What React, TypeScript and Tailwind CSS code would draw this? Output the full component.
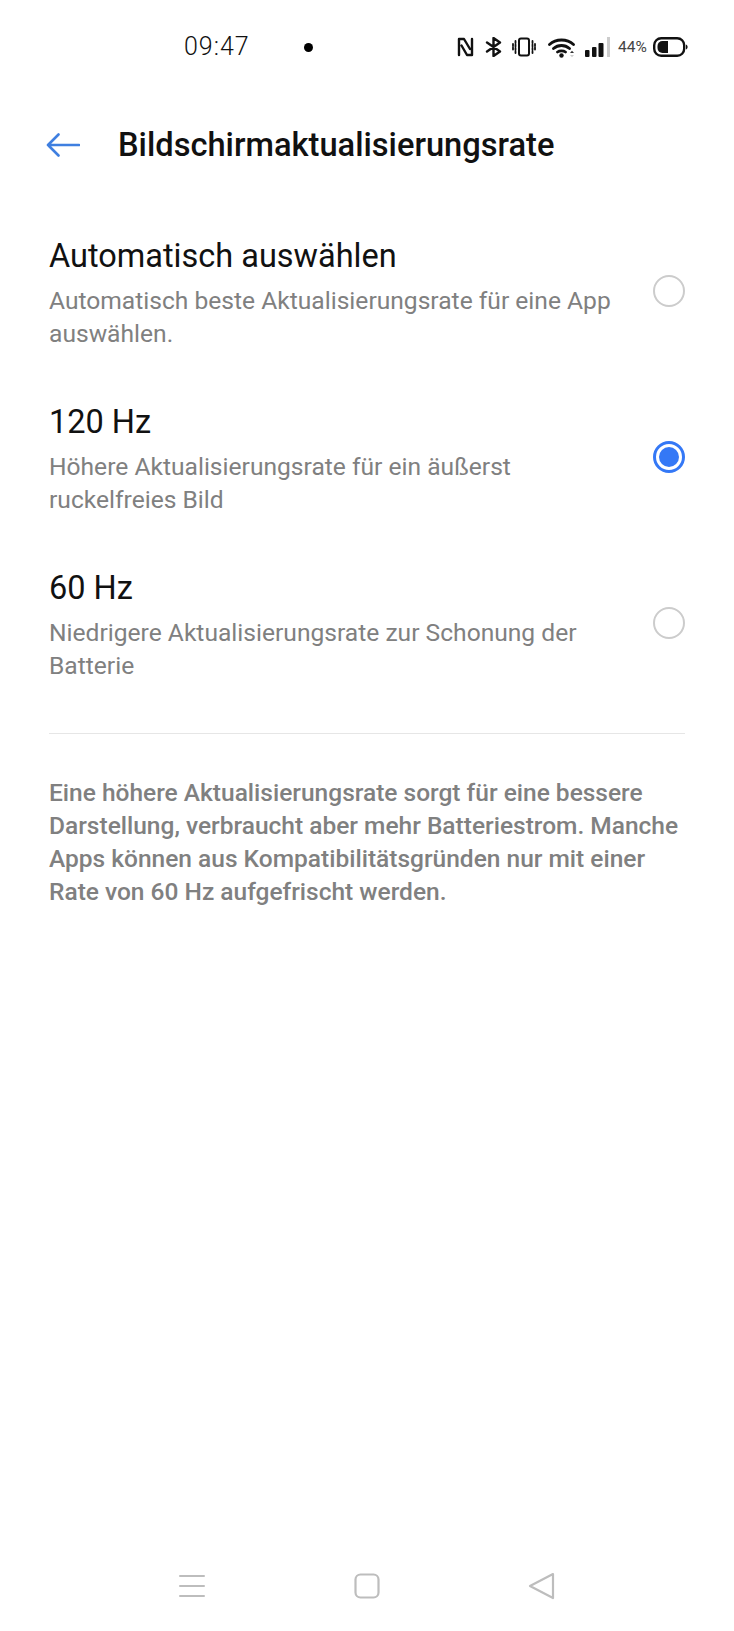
import React from 'react';

const options = [
  {
    title: 'Automatisch auswählen',
    lines: ['Automatisch beste Aktualisierungsrate für eine App', 'auswählen.'],
    selected: false,
  },
  {
    title: '120 Hz',
    lines: ['Höhere Aktualisierungsrate für ein äußerst', 'ruckelfreies Bild'],
    selected: true,
  },
  {
    title: '60 Hz',
    lines: ['Niedrigere Aktualisierungsrate zur Schonung der', 'Batterie'],
    selected: false,
  },
];

const StatusIcons: React.FC = () => (
  <div className="flex items-center">
    {/* NFC */}
    <svg width="17" height="20" viewBox="0 0 17 20" fill="none" stroke="#111" strokeWidth="2.400" strokeLinejoin="round" strokeLinecap="round">
      <path d="M2 18V2h5l6 10M15 2v16h-5L4.500 8.500" />
    </svg>
    {/* bluetooth */}
    <svg className="ml-[11px]" width="17" height="20" viewBox="0 0 17 20" fill="none" stroke="#111" strokeWidth="2.400" strokeLinejoin="round" strokeLinecap="round">
      <path d="M2 5.500l13 9-6.500 4.500V1L15 5.500l-13 9" />
    </svg>
    {/* vibrate */}
    <svg className="ml-[10px]" width="24" height="20" viewBox="0 0 24 20" fill="none" stroke="#111" strokeLinecap="round">
      <rect x="7" y="1.500" width="10" height="17" rx="2" strokeWidth="2" />
      <path d="M3.500 4v12M1 7v6M20.500 4v12M23 7v6" strokeWidth="1.800" strokeDasharray="2 1.500" />
    </svg>
    {/* wifi */}
    <svg className="ml-[12px]" width="28" height="22" viewBox="0 0 28 22">
      <path d="M1.500 8.500C8 2.500 19 2.500 25.500 8.500M5.500 12.500C10 8.500 17 8.500 21.500 12.500M9.500 16C11.500 14.500 15.500 14.500 17.500 16" fill="none" stroke="#111" strokeWidth="2.800" strokeLinecap="round" />
      <circle cx="13.500" cy="19.500" r="2.200" fill="#111" />
      <path d="M22 17l2-2.200 2 2.200z" fill="#333" />
      <path d="M22 19l2 2.200 2-2.200z" fill="#ccc" />
    </svg>
    {/* signal */}
    <svg className="ml-[8px]" width="27" height="22" viewBox="0 0 27 22">
      <rect x="1" y="14" width="4.500" height="7" rx="1" fill="#111" />
      <rect x="8" y="11" width="4.500" height="10" rx="1" fill="#111" />
      <rect x="14.500" y="7" width="5" height="14" rx="1" fill="#111" />
      <rect x="23" y="1" width="3" height="20" fill="#ccc" />
    </svg>
    <span className="ml-[7px] text-[15.500px] leading-5 text-[#444]">44%</span>
    {/* battery */}
    <svg className="ml-[6px]" width="35" height="20" viewBox="0 0 35 20">
      <rect x="1.200" y="1.200" width="30" height="17.600" rx="7" fill="none" stroke="#111" strokeWidth="2.400" />
      <path d="M4.500 9a5 5 0 0 1 5-5H15v12H9.500a5 5 0 0 1-5-5z" fill="#111" />
      <path d="M33 7.500c1.100.5 1.600 1.300 1.600 2.500s-.5 2-1.600 2.500z" fill="#111" />
    </svg>
  </div>
);

export default function App() {
  return (
    <div className="w-[734px] h-[1631px] bg-white flex flex-col font-['Roboto',sans-serif]">
      {/* status bar */}
      <div className="h-[94px] pt-[32px] flex items-start">
        <div className="h-[30px] pl-[184px] flex items-center w-[457px]">
          <span className="text-[25px] leading-[30px] font-light text-[#111] tracking-[1px]">09:47</span>
          <span className="ml-[54px] w-[9px] h-[9px] rounded-full bg-black"></span>
        </div>
        <div className="h-[30px] flex items-center">
          <StatusIcons />
        </div>
      </div>

      {/* header */}
      <div className="h-[102px] flex items-center pl-[46px]">
        <svg width="34" height="26" viewBox="0 0 34 26" fill="none" stroke="#3f7fe0" strokeWidth="2.600" strokeLinecap="round" strokeLinejoin="round">
          <path d="M2 13h31M12.500 2.500L2 13l10.500 10.500" />
        </svg>
        <h1 className="ml-[38px] text-[32.650px] leading-[40px] font-medium text-[#111]">Bildschirmaktualisierungsrate</h1>
      </div>

      {/* options */}
      <div className="pt-[40px] pl-[49px] pr-[49px] flex flex-col">
        {options.map(o => (
          <div key={o.title} className="h-[166px] flex items-start justify-between">
            <div>
              <div className="text-[32.500px] leading-[40px] text-[#111]">{o.title}</div>
              <div className="mt-[8px] text-[24.600px] leading-[33px] text-[#808080]">
                {o.lines.map(l => (
                  <div key={l}>{l}</div>
                ))}
              </div>
            </div>
            <div className="mt-[39px] mr-0 shrink-0">
              {o.selected ? (
                <div className="w-[32px] h-[32px] rounded-full border-[3px] border-[#3478f6] flex items-center justify-center">
                  <div className="w-[20px] h-[20px] rounded-full bg-[#3478f6]"></div>
                </div>
              ) : (
                <div className="w-[32px] h-[32px] rounded-full border-[2.500px] border-[#cccccc]"></div>
              )}
            </div>
          </div>
        ))}
      </div>

      {/* note */}
      <div className="mx-[49px] -mt-px border-t border-[#e6e6e6] pt-[42px] text-[24.500px] leading-[33px] font-medium text-[#808080]">
        <div>Eine höhere Aktualisierungsrate sorgt für eine bessere</div>
        <div>Darstellung, verbraucht aber mehr Batteriestrom. Manche</div>
        <div>Apps können aus Kompatibilitätsgründen nur mit einer</div>
        <div>Rate von 60 Hz aufgefrischt werden.</div>
      </div>

      {/* nav bar */}
      <div className="mt-auto h-[92px] flex items-start justify-center pt-[33px]">
        <div className="flex items-center w-[378px] justify-between">
          <svg width="28" height="26" viewBox="0 0 28 26" stroke="#bdbdbd" strokeWidth="2" strokeLinecap="round">
            <path d="M2 3h24M2 13h24M2 23h24" />
          </svg>
          <svg width="26" height="26" viewBox="0 0 26 26" fill="none" stroke="#bdbdbd" strokeWidth="2.200">
            <rect x="1.500" y="1.500" width="23" height="23" rx="5" />
          </svg>
          <svg width="28" height="28" viewBox="0 0 28 28" fill="none" stroke="#bdbdbd" strokeWidth="2.200" strokeLinejoin="round">
            <path d="M25 2L2 14l23 12z" />
          </svg>
        </div>
      </div>
    </div>
  );
}
